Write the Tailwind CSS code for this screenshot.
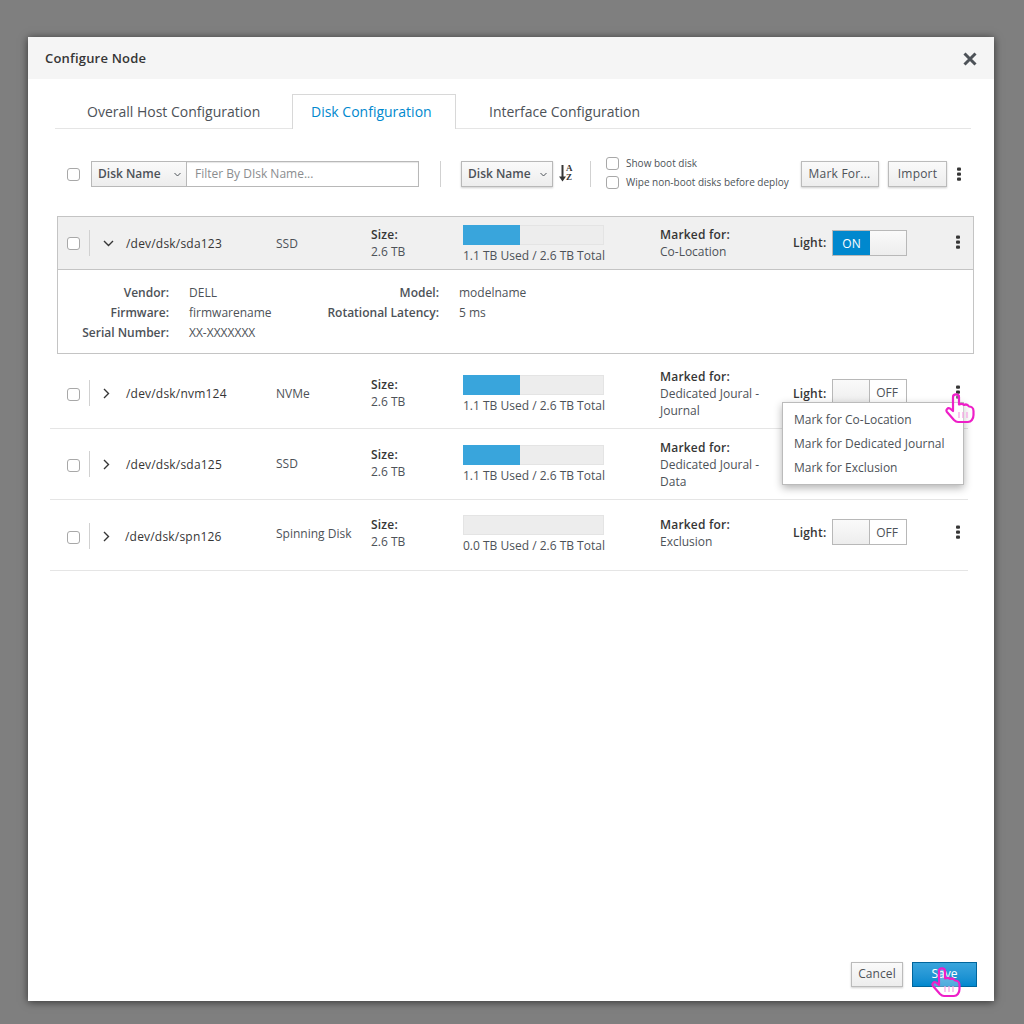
<!DOCTYPE html>
<html><head><meta charset="utf-8"><title>Configure Node</title>
<script src="https://cdn.jsdelivr.net/npm/@tailwindcss/browser@4"></script></head>
<body class="m-0 bg-[#7f7f7f]">
<div class="w-[1024px] h-[1024px] pt-[37px] pl-[28px] font-['Open_Sans',sans-serif] text-[12px] leading-[17px] text-[#4d5258] overflow-hidden">
<div class="relative w-[966px] h-[964px] bg-white flex flex-col shadow-[0_1px_8px_rgba(0,0,0,0.6)]">
  <div class="h-[42px] shrink-0 bg-[#f5f5f5] flex items-center justify-between pl-[17px] pr-[17px]">
    <span class="text-[13px] font-semibold text-[#363636] tracking-[0.2px] mt-[1px]">Configure Node</span>
    <svg width="14" height="14" viewBox="0 0 14 14" class="mt-[1px]"><path d="M1.500 1.500L12.500 12.500M12.500 1.500L1.500 12.500" stroke="#4d5258" stroke-width="3"/></svg>
  </div>
  <div class="mt-[15px] ml-[27px] mr-[23px] h-[35px] border-b border-[#e5e5e5] flex text-[14px]">
    <div class="pl-[32px] pt-[9px] w-[237px] whitespace-nowrap">Overall Host Configuration</div>
    <div class="w-[164px] h-[35px] border border-b-0 border-[#d8d8d8] bg-white pl-[18px] pt-[8px] text-[#0088ce] whitespace-nowrap">Disk Configuration</div>
    <div class="pl-[33px] pt-[9px] whitespace-nowrap">Interface Configuration</div>
  </div>
  <div class="mt-[32px] h-[26px] flex items-center relative">
    <span class="ml-[39px] w-[13px] h-[13px] border border-[#a8a8a8] rounded-[3px] bg-white"></span>
    <div class="ml-[11px] w-[328px] h-[26px] flex border border-[#b8b8b8] shadow-[inset_0_1px_1px_rgba(0,0,0,0.1)]">
      <div class="w-[95px] flex items-center justify-between pl-[6px] pr-[5px] pb-[2px] border-r border-[#b8b8b8] bg-gradient-to-b from-[#fafafa] to-[#ededed] font-semibold"><span>Disk Name</span><svg width="7" height="5" viewBox="0 0 7 5" class="mt-[2px]"><path d="M0.5 1L3.5 4L6.5 1" fill="none" stroke="#4d5258"/></svg></div>
      <div class="flex items-center pl-[8px] pb-[2px] text-[#8b8d8f]">Filter By DIsk Name...</div>
    </div>
    <span class="ml-[21px] w-px h-[26px] bg-[#d1d1d1]"></span>
    <div class="ml-[20px] w-[92px] h-[26px] flex items-center justify-between pl-[6px] pr-[5px] pb-[2px] border border-[#b8b8b8] bg-gradient-to-b from-[#fafafa] to-[#ededed] shadow-[0_1px_2px_rgba(0,0,0,0.2)] font-semibold"><span>Disk Name</span><svg width="7" height="5" viewBox="0 0 7 5" class="mt-[2px]"><path d="M0.5 1L3.5 4L6.5 1" fill="none" stroke="#4d5258"/></svg></div>
    <div class="ml-[6px] w-[16px] h-[20px] relative">
      <svg width="7" height="17" viewBox="0 0 7 17" class="absolute left-0 top-[1px]"><path d="M3.500 0V13" fill="none" stroke="#363636" stroke-width="2"/><path d="M0 11.500H7L3.500 16.500Z" fill="#363636"/></svg>
      <span class="absolute left-[7px] top-[0px] text-[9px] leading-[9px] font-bold text-[#363636] font-['Liberation_Serif',serif]">A<br>Z</span>
    </div>
    <span class="ml-[15px] w-px h-[26px] bg-[#d1d1d1]"></span>
    <div class="ml-[15px] flex flex-col gap-[6px] text-[10px] leading-[13px] -mt-[3px]">
      <label class="flex items-center gap-[7px]"><span class="w-[13px] h-[13px] border border-[#a8a8a8] rounded-[3px]"></span>Show boot disk</label>
      <label class="flex items-center gap-[7px]"><span class="w-[13px] h-[13px] border border-[#a8a8a8] rounded-[3px]"></span>Wipe non-boot disks before deploy</label>
    </div>
    <div class="absolute left-[773px] w-[78px] h-[26px] pb-[2px] pr-[1px] flex items-center justify-center border border-[#bbb] bg-gradient-to-b from-[#fafafa] to-[#ededed] shadow-[0_1px_2px_rgba(0,0,0,0.2)] tracking-[0.2px]">Mark For...</div>
    <div class="absolute left-[860px] w-[59px] h-[26px] pb-[2px] flex items-center justify-center border border-[#bbb] bg-gradient-to-b from-[#fafafa] to-[#ededed] shadow-[0_1px_2px_rgba(0,0,0,0.2)] tracking-[0.2px]">Import</div>
    <svg width="4" height="14" viewBox="0 0 4 14" class="absolute left-[929px] -mt-[1px]"><rect y="0.500" width="4" height="3.300" rx="1" fill="#363636"/><rect y="5.500" width="4" height="3.300" rx="1" fill="#363636"/><rect y="10.500" width="4" height="3.300" rx="1" fill="#363636"/></svg>
  </div>

  <!-- expanded card -->
  <div class="mt-[29px] ml-[29px] w-[917px] h-[138px] border border-[#c4c4c4]">
    <div class="h-[53px] bg-[#f0f0f0] border-b border-[#c4c4c4] flex items-start">
      <span class="ml-[9px] mt-[20px] w-[13px] h-[13px] shrink-0 border border-[#a8a8a8] rounded-[3px] bg-white"></span>
      <span class="ml-[9px] mt-[13px] w-px h-[26px] shrink-0 bg-[#d1d1d1]"></span>
      <svg width="11" height="7" viewBox="0 0 11 7" class="ml-[13px] mt-[23px] shrink-0"><path d="M1 1L5.500 5.500L10 1" fill="none" stroke="#363636" stroke-width="1.400"/></svg>
      <span class="ml-[12px] mt-[18px] w-[150px] shrink-0 text-[#363636] font-medium tracking-[0.2px]">/dev/dsk/sda123</span>
      <span class="mt-[18px] w-[95px] shrink-0">SSD</span>
      <div class="mt-[9px] w-[92px] shrink-0"><b class="font-semibold text-[#363636] tracking-[0.2px]">Size:</b><br>2.6 TB</div>
      <div class="mt-[8px] w-[197px] shrink-0"><div class="w-[141px] h-[20px] bg-[#ededed] shadow-[inset_0_0_0_1px_#e4e4e4]"><div class="w-[57px] h-[20px] bg-[#39a5dc]"></div></div><div class="mt-[2px]">1.1 TB Used / 2.6 TB Total</div></div>
      <div class="mt-[9px] w-[133px] shrink-0"><b class="font-semibold text-[#363636] tracking-[0.2px]">Marked for:</b><br>Co-Location</div>
      <b class="mt-[17px] w-[39px] shrink-0 font-semibold text-[#363636] tracking-[0.2px]">Light:</b>
      <div class="mt-[13px] w-[75px] h-[26px] shrink-0 flex border border-[#b8b8b8] bg-gradient-to-b from-[#fafafa] to-[#ededed]"><span class="w-[37px] flex items-center justify-center bg-[#0088ce] text-white">ON</span></div>
      <svg width="4" height="14" viewBox="0 0 4 14" class="ml-[49px] mt-[18px] shrink-0"><rect y="0.500" width="4" height="3.300" rx="1" fill="#363636"/><rect y="5.500" width="4" height="3.300" rx="1" fill="#363636"/><rect y="10.500" width="4" height="3.300" rx="1" fill="#363636"/></svg>
    </div>
    <div class="pt-[13px] flex">
      <div class="w-[207px] grid grid-cols-[111px_1fr] gap-x-[20px] leading-[20px]">
        <b class="text-right font-semibold">Vendor:</b><span>DELL</span>
        <b class="text-right font-semibold">Firmware:</b><span>firmwarename</span>
        <b class="text-right font-semibold">Serial Number:</b><span>XX-XXXXXXX</span>
      </div>
      <div class="ml-[9px] grid grid-cols-[165px_1fr] gap-x-[20px] leading-[20px] h-[40px]">
        <b class="text-right font-semibold">Model:</b><span>modelname</span>
        <b class="text-right font-semibold">Rotational Latency:</b><span>5 ms</span>
      </div>
    </div>
  </div>

  <!-- rows -->
  <div class="ml-[22px] w-[918px] h-[75px] border-b border-[#e5e5e5] flex items-start">
    <span class="ml-[17px] mt-[34px] w-[13px] h-[13px] shrink-0 border border-[#a8a8a8] rounded-[3px] bg-white"></span>
    <span class="ml-[9px] mt-[26px] w-px h-[26px] shrink-0 bg-[#d1d1d1]"></span>
    <svg width="7" height="11" viewBox="0 0 7 11" class="ml-[13px] mt-[34px] shrink-0"><path d="M1 1L5.500 5.500L1 10" fill="none" stroke="#363636" stroke-width="1.400"/></svg>
    <span class="ml-[16px] mt-[31px] w-[150px] shrink-0 text-[#363636] font-medium tracking-[0.2px]">/dev/dsk/nvm124</span>
    <span class="mt-[31px] w-[95px] shrink-0">NVMe</span>
    <div class="mt-[22px] w-[92px] shrink-0"><b class="font-semibold text-[#363636] tracking-[0.2px]">Size:</b><br>2.6 TB</div>
    <div class="mt-[21px] w-[197px] shrink-0"><div class="w-[141px] h-[20px] bg-[#ededed] shadow-[inset_0_0_0_1px_#e4e4e4]"><div class="w-[57px] h-[20px] bg-[#39a5dc]"></div></div><div class="mt-[2px]">1.1 TB Used / 2.6 TB Total</div></div>
    <div class="mt-[14px] w-[133px] shrink-0"><b class="font-semibold text-[#363636] tracking-[0.2px]">Marked for:</b><br>Dedicated Joural -<br>Journal</div>
    <b class="mt-[31px] w-[39px] shrink-0 font-semibold text-[#363636] tracking-[0.2px]">Light:</b>
    <div class="mt-[25px] w-[75px] h-[26px] shrink-0 flex justify-end border border-[#b8b8b8] bg-gradient-to-b from-[#fafafa] to-[#ededed]"><span class="w-[37px] pr-[2px] flex items-center justify-center bg-white border-l border-[#b8b8b8]">OFF</span></div>
    <svg width="4" height="14" viewBox="0 0 4 14" class="ml-[49px] mt-[31px] shrink-0"><rect y="0.500" width="4" height="3.300" rx="1" fill="#363636"/><rect y="5.500" width="4" height="3.300" rx="1" fill="#363636"/><rect y="10.500" width="4" height="3.300" rx="1" fill="#363636"/></svg>
  </div>
  <div class="ml-[22px] w-[918px] h-[71px] border-b border-[#e5e5e5] flex items-start">
    <span class="ml-[17px] mt-[30px] w-[13px] h-[13px] shrink-0 border border-[#a8a8a8] rounded-[3px] bg-white"></span>
    <span class="ml-[9px] mt-[22px] w-px h-[26px] shrink-0 bg-[#d1d1d1]"></span>
    <svg width="7" height="11" viewBox="0 0 7 11" class="ml-[13px] mt-[30px] shrink-0"><path d="M1 1L5.500 5.500L1 10" fill="none" stroke="#363636" stroke-width="1.400"/></svg>
    <span class="ml-[16px] mt-[27px] w-[150px] shrink-0 text-[#363636] font-medium tracking-[0.2px]">/dev/dsk/sda125</span>
    <span class="mt-[26px] w-[95px] shrink-0">SSD</span>
    <div class="mt-[17px] w-[92px] shrink-0"><b class="font-semibold text-[#363636] tracking-[0.2px]">Size:</b><br>2.6 TB</div>
    <div class="mt-[16px] w-[197px] shrink-0"><div class="w-[141px] h-[20px] bg-[#ededed] shadow-[inset_0_0_0_1px_#e4e4e4]"><div class="w-[57px] h-[20px] bg-[#39a5dc]"></div></div><div class="mt-[2px]">1.1 TB Used / 2.6 TB Total</div></div>
    <div class="mt-[10px] w-[133px] shrink-0"><b class="font-semibold text-[#363636] tracking-[0.2px]">Marked for:</b><br>Dedicated Joural -<br>Data</div>
  </div>
  <div class="ml-[22px] w-[918px] h-[71px] border-b border-[#e5e5e5] flex items-start">
    <span class="ml-[17px] mt-[31px] w-[13px] h-[13px] shrink-0 border border-[#a8a8a8] rounded-[3px] bg-white"></span>
    <span class="ml-[9px] mt-[23px] w-px h-[26px] shrink-0 bg-[#d1d1d1]"></span>
    <svg width="7" height="11" viewBox="0 0 7 11" class="ml-[13px] mt-[31px] shrink-0"><path d="M1 1L5.500 5.500L1 10" fill="none" stroke="#363636" stroke-width="1.400"/></svg>
    <span class="ml-[15px] mt-[28px] w-[151px] shrink-0 text-[#363636] font-medium tracking-[0.2px]">/dev/dsk/spn126</span>
    <span class="mt-[25px] w-[95px] shrink-0">Spinning Disk</span>
    <div class="mt-[16px] w-[92px] shrink-0"><b class="font-semibold text-[#363636] tracking-[0.2px]">Size:</b><br>2.6 TB</div>
    <div class="mt-[15px] w-[197px] shrink-0"><div class="w-[141px] h-[20px] bg-[#ededed] shadow-[inset_0_0_0_1px_#e4e4e4]"></div><div class="mt-[2px]">0.0 TB Used / 2.6 TB Total</div></div>
    <div class="mt-[16px] w-[133px] shrink-0"><b class="font-semibold text-[#363636] tracking-[0.2px]">Marked for:</b><br>Exclusion</div>
    <b class="mt-[24px] w-[39px] shrink-0 font-semibold text-[#363636] tracking-[0.2px]">Light:</b>
    <div class="mt-[19px] w-[75px] h-[26px] shrink-0 flex justify-end border border-[#b8b8b8] bg-gradient-to-b from-[#fafafa] to-[#ededed]"><span class="w-[37px] pr-[2px] flex items-center justify-center bg-white border-l border-[#b8b8b8]">OFF</span></div>
    <svg width="4" height="14" viewBox="0 0 4 14" class="ml-[49px] mt-[25px] shrink-0"><rect y="0.500" width="4" height="3.300" rx="1" fill="#363636"/><rect y="5.500" width="4" height="3.300" rx="1" fill="#363636"/><rect y="10.500" width="4" height="3.300" rx="1" fill="#363636"/></svg>
  </div>

  <div class="mt-auto pb-[14px] pr-[17px] flex justify-end gap-[9px]">
    <div class="w-[52px] h-[25px] pb-[2px] flex items-center justify-center border border-[#bbb] bg-gradient-to-b from-[#fafafa] to-[#ededed] shadow-[0_1px_2px_rgba(0,0,0,0.2)] font-medium tracking-[0.1px]">Cancel</div>
    <div class="w-[65px] h-[25px] pb-[2px] flex items-center justify-center border border-[#00659c] bg-gradient-to-b from-[#39a5dc] to-[#0088ce] text-white font-medium">Save</div>
  </div>

  <!-- dropdown menu -->
  <div class="absolute left-[754px] top-[365px] w-[182px] h-[83px] bg-white border border-[#bbb] shadow-[0_3px_8px_rgba(0,0,0,0.3)] pt-[5px] pl-[11px] leading-[24px]">
    <div>Mark for Co-Location</div><div>Mark for Dedicated Journal</div><div>Mark for Exclusion</div>
  </div>
  <!-- hand cursors -->
  <svg width="30" height="31" viewBox="0 0 30 31" class="absolute left-[917px] top-[356px]"><path d="M8 4C8 0.500 14 0.500 14 4V11.500C16 10.500 18 11 19 12C21 11 23 12 24 13.500C26 13.500 28.500 15 28.500 18V22C28.500 26 26 29 23 29H13C11 29 10 28 9 27L2 19C0.500 17 2.500 14.500 5 15.500L8 18Z" fill="#fff" fill-opacity="0.3" stroke="#ee1fc8" stroke-width="2.200" stroke-linejoin="round"/><path d="M14 19V25M18 19V25M22 19V25" stroke="#f7a0e4" stroke-width="1.200"/></svg>
  <svg width="30" height="31" viewBox="0 0 30 31" class="absolute left-[903px] top-[930px]"><path d="M8 4C8 0.500 14 0.500 14 4V11.500C16 10.500 18 11 19 12C21 11 23 12 24 13.500C26 13.500 28.500 15 28.500 18V22C28.500 26 26 29 23 29H13C11 29 10 28 9 27L2 19C0.500 17 2.500 14.500 5 15.500L8 18Z" fill="#fff" fill-opacity="0.3" stroke="#ee1fc8" stroke-width="2.200" stroke-linejoin="round"/><path d="M14 19V25M18 19V25M22 19V25" stroke="#f7a0e4" stroke-width="1.200"/></svg>
</div>
</div>
</body></html>
